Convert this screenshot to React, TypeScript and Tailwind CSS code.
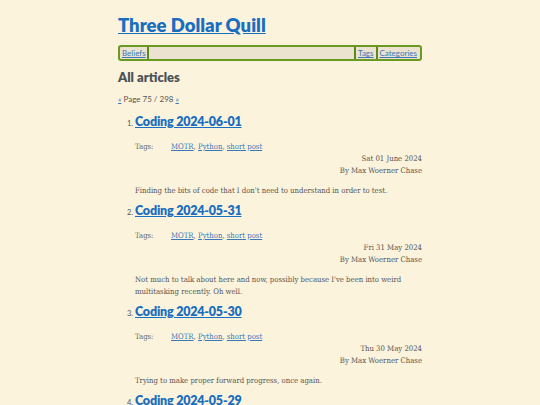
const posts = [
  {
    title: "Coding 2024-06-01",
    date: "Sat 01 June 2024",
    summary: "Finding the bits of code that I don't need to understand in order to test.",
  },
  {
    title: "Coding 2024-05-31",
    date: "Fri 31 May 2024",
    summary:
      "Not much to talk about here and now, possibly because I've been into weird multitasking recently. Oh well.",
  },
  {
    title: "Coding 2024-05-30",
    date: "Thu 30 May 2024",
    summary: "Trying to make proper forward progress, once again.",
  },
  {
    title: "Coding 2024-05-29",
    date: "Wed 29 May 2024",
    summary: "More work.",
  },
];

const sans = { fontFamily: 'Lato, "Open Sans", sans-serif' };
const serif = { fontFamily: '"DejaVu Serif Condensed", "DejaVu Serif", serif' };

export default function App() {
  return (
    <div className="min-h-screen bg-[#fcf3dc] text-[#555]" style={serif}>
      <div className="mx-auto w-[304px] pt-[14px]">
        <h1 className="text-[18.5px] font-extrabold leading-[22px]" style={sans}>
          <a href="#" className="text-[#1a6ec0] underline">
            Three Dollar Quill
          </a>
        </h1>

        <nav
          className="mt-[9px] flex h-[16px] items-center rounded-[3px] border-2 border-[#6a9a20] bg-[#ebe3cf] px-[1px] text-[8px]"
          style={sans}
        >
          <a href="#" className="px-[1px] text-[#3a78b8] underline">Beliefs</a>
          <span className="h-full w-[2px] bg-[#5a8a18]" />
          <span className="flex-1" />
          <span className="h-full w-[2px] bg-[#5a8a18]" />
          <a href="#" className="px-[2px] text-[#3a78b8] underline">Tags</a>
          <span className="h-full w-[2px] bg-[#5a8a18]" />
          <a href="#" className="px-[2px] text-[#3a78b8] underline">Categories</a>
        </nav>

        <h2 className="mt-[7px] text-[13px] font-extrabold leading-[18px] text-[#4c5358]" style={sans}>
          All articles
        </h2>

        <p className="mt-[8px] text-[8px] leading-[10px] text-[#555]" style={sans}>
          <a href="#" className="text-[#3a78b8] underline">«</a> Page 75 / 298{" "}
          <a href="#" className="text-[#3a78b8] underline">»</a>
        </p>

        <ol className="mt-[9px] list-decimal pl-[17px]">
          {posts.map((p) => (
            <li key={p.title} className="mb-[5px] text-[7.5px] marker:text-[#555]" style={sans}>
              <h3 className="inline text-[12.5px] font-extrabold leading-[18px] tracking-[-0.2px]">
                <a href="#" className="text-[#1a6ec0] underline">{p.title}</a>
              </h3>
              <div className="mt-[10px] flex text-[7.7px] leading-[12px]" style={serif}>
                <span className="w-[36px] text-[#666]">Tags:</span>
                <span>
                  <a href="#" className="text-[#3a78b8] underline">MOTR</a>,{" "}
                  <a href="#" className="text-[#3a78b8] underline">Python</a>,{" "}
                  <a href="#" className="text-[#3a78b8] underline">short post</a>
                </span>
              </div>
              <div className="text-right text-[7.7px] leading-[12px] text-[#555]" style={serif}>
                <div>{p.date}</div>
                <div>By Max Woerner Chase</div>
              </div>
              <p className="mt-[8px] text-[7.7px] leading-[12px] text-[#555]" style={serif}>
                {p.summary}
              </p>
            </li>
          ))}
        </ol>
      </div>
    </div>
  );
}
